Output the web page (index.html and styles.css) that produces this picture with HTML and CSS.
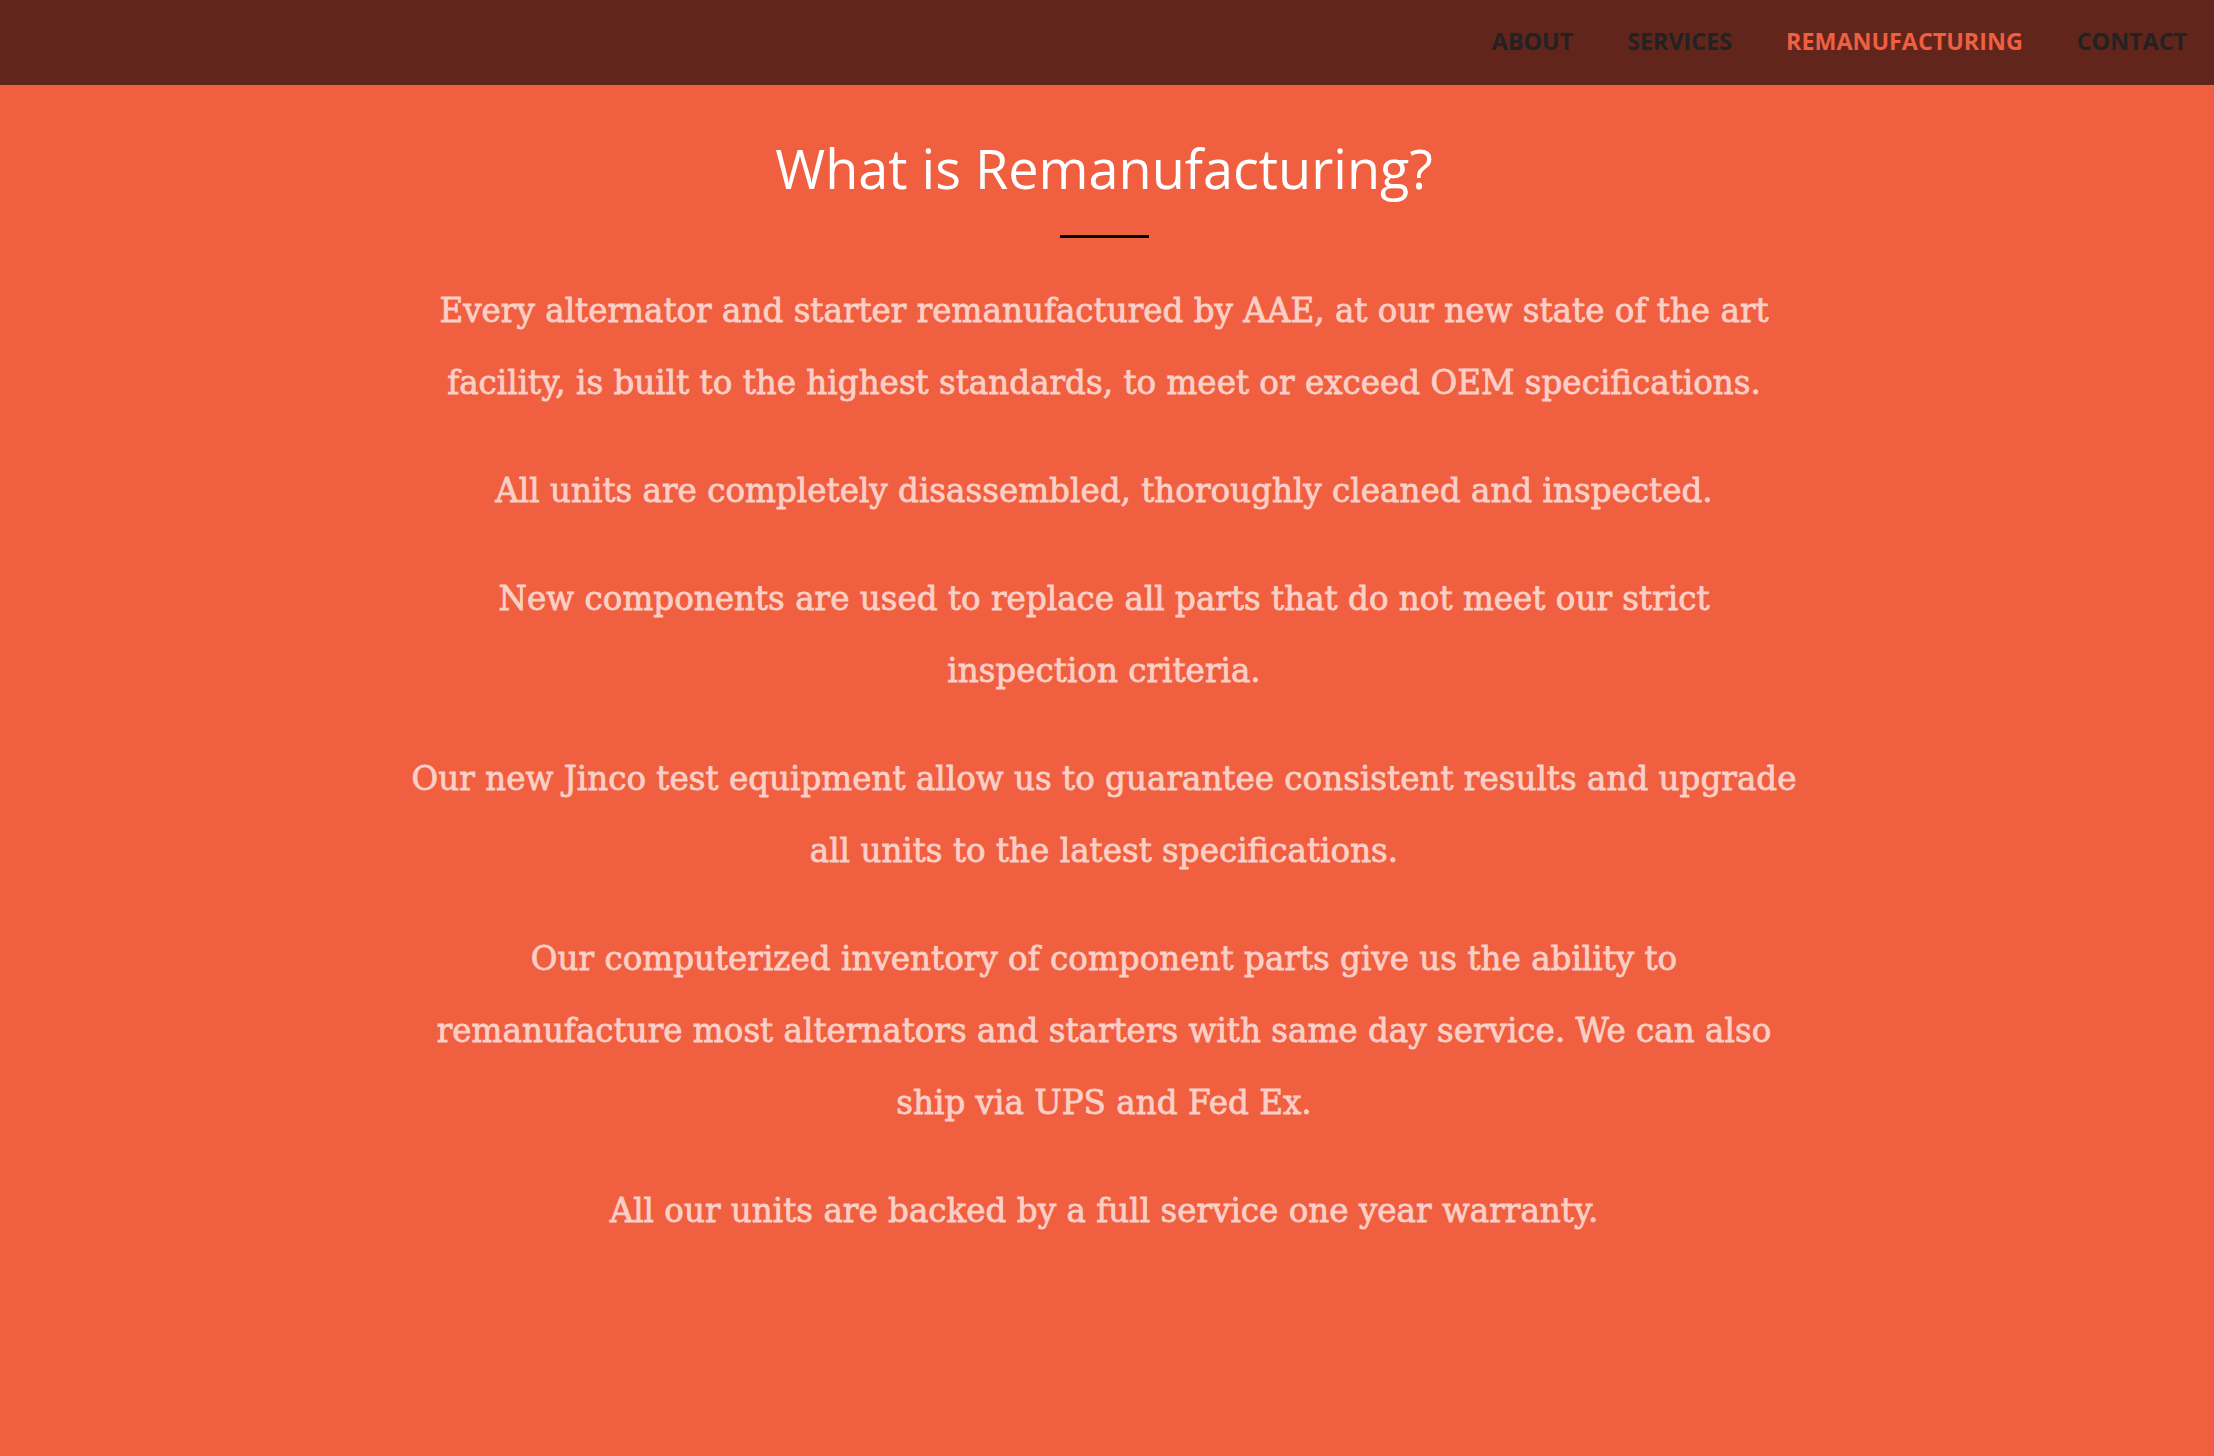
FILE: index.html
```html
<!DOCTYPE html>
<html lang="en">
<head>
<meta charset="utf-8">
<title>What is Remanufacturing?</title>
<link rel="stylesheet" href="styles.css">
</head>
<body>
<nav class="navbar">
  <ul class="nav-links">
    <li><a href="#about">About</a></li>
    <li><a href="#services">Services</a></li>
    <li><a class="active" href="#remanufacturing">Remanufacturing</a></li>
    <li><a href="#contact">Contact</a></li>
  </ul>
</nav>
<section class="section">
  <h2 class="section-heading">What is Remanufacturing?</h2>
  <hr class="divider">
  <div class="copy">
    <p>Every alternator and starter remanufactured by AAE, at our new state of the art facility, is built to the highest standards, to meet or exceed OEM specifications.</p>
    <p>All units are completely disassembled, thoroughly cleaned and inspected.</p>
    <p>New components are used to replace all parts that do not meet our strict inspection criteria.</p>
    <p>Our new Jinco test equipment allow us to guarantee consistent results and upgrade all units to the latest specifications.</p>
    <p>Our computerized inventory of component parts give us the ability to remanufacture most alternators and starters with same day service. We can also ship via UPS and Fed Ex.</p>
    <p>All our units are backed by a full service one year warranty.</p>
  </div>
</section>
</body>
</html>
```
FILE: styles.css
```css
html, body {
  margin: 0;
  padding: 0;
}
body {
  background: #f05f40;
  min-height: 1456px;
  font-family: "Open Sans", "Liberation Sans", sans-serif;
}
.navbar {
  background: #61251c;
  height: 85px;
  display: flex;
  justify-content: flex-end;
  align-items: center;
}
.nav-links {
  list-style: none;
  margin: 0;
  padding: 0;
  display: flex;
}
.nav-links a {
  display: block;
  padding: 0 27px;
  color: #222222;
  text-decoration: none;
  text-transform: uppercase;
  font-weight: 700;
  font-size: 23.3px;
  line-height: 30px;
  position: relative;
  top: -2px;
}
.nav-links a.active {
  color: #f05f40;
}
.section {
  display: flex;
  flex-direction: column;
  align-items: center;
  padding-top: 54px;
  padding-right: 6px;
}
.section-heading {
  margin: 0;
  color: #ffffff;
  font-weight: 400;
  font-size: 54px;
  line-height: 1.1;
}
.divider {
  width: 89px;
  height: 3px;
  margin: 37px 0 0;
  border: 0;
  background: #000000;
}
.copy {
  width: 1388px;
  margin-top: 37px;
  text-align: center;
}
.copy p {
  margin: 0 0 36px;
  color: #fbcfc6;
  font-family: "DejaVu Serif", "Liberation Serif", serif;
  font-size: 32.6px;
  line-height: 72px;
  -webkit-text-stroke: 0.8px #fbcfc6;
}
```
